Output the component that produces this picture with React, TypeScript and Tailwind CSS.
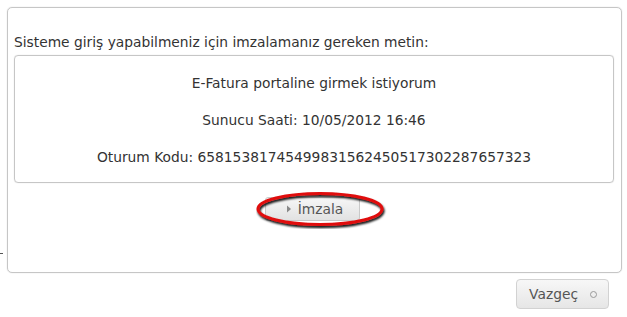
export default function App() {
  const font = { fontFamily: '"DejaVu Sans", Verdana, sans-serif' };
  return (
    <div className="relative w-[627px] h-[317px] bg-white text-[#333]" style={font}>
      <div className="absolute left-0 top-[253px] w-[3px] h-px bg-[#555]" />
      <div className="pt-[7px] pl-[7px] pr-[5px]">
        <div className="relative h-[266px] rounded-[5px] border border-[#c6c6c6] shadow-[0_0_1px_rgba(0,0,0,0.25)] px-[6px] pt-[25px]">
          <div className="text-[13.8px] leading-[18px]">
            Sisteme giriş yapabilmeniz için imzalamanız gereken metin:
          </div>
          <div className="mt-[4px] mr-[1px] h-[128px] rounded-[4px] border border-[#c6c6c6] shadow-[0_0_1px_rgba(0,0,0,0.2)] pt-[18px] flex flex-col items-center gap-[19px] text-[13.8px] leading-[18px]">
            <div>E-Fatura portaline girmek istiyorum</div>
            <div>Sunucu Saati: 10/05/2012 16:46</div>
            <div>Oturum Kodu: 65815381745499831562450517302287657323</div>
          </div>
          <div className="mt-[14px] flex justify-center">
            <div className="relative">
              <button className="flex items-center h-[24px] pl-[20px] pr-[16px] rounded-[3px] border border-[#c9c9c9] bg-gradient-to-b from-[#f6f6f6] to-[#e2e2e2] text-[#555] text-[13.8px] leading-[18px] ml-[-4px]">
                <svg width="6" height="8" viewBox="0 0 6 8" className="mr-[6px]">
                  <path d="M1 0.5 L5 4 L1 7.5 Z" fill="#888" />
                </svg>
                İmzala
              </button>
              <svg
                className="absolute left-[-13px] top-[-6px] pointer-events-none"
                width="132"
                height="38"
                viewBox="0 0 132 38"
              >
                <defs>
                  <filter id="sh" x="-10%" y="-30%" width="120%" height="160%">
                    <feGaussianBlur in="SourceAlpha" stdDeviation="1.2" />
                    <feOffset dx="1" dy="1.5" result="b" />
                    <feMerge>
                      <feMergeNode in="b" />
                      <feMergeNode in="SourceGraphic" />
                    </feMerge>
                  </filter>
                </defs>
                <ellipse
                  cx="64"
                  cy="18"
                  rx="62"
                  ry="15.5"
                  fill="none"
                  stroke="#e01010"
                  strokeWidth="3"
                  filter="url(#sh)"
                />
              </svg>
            </div>
          </div>
        </div>
      </div>
      <div className="flex justify-end pr-[18px] pt-[6px]">
        <button className="flex items-center h-[30px] pl-[12px] pr-[11px] rounded-[4px] border border-[#d2d2d2] bg-gradient-to-b from-[#f7f7f7] to-[#e6e6e6] text-[#555] text-[13.8px] leading-[18px]">
          Vazgeç
          <span className="ml-[12px] w-[7px] h-[7px] rounded-full border border-[#999]" />
        </button>
      </div>
    </div>
  );
}
